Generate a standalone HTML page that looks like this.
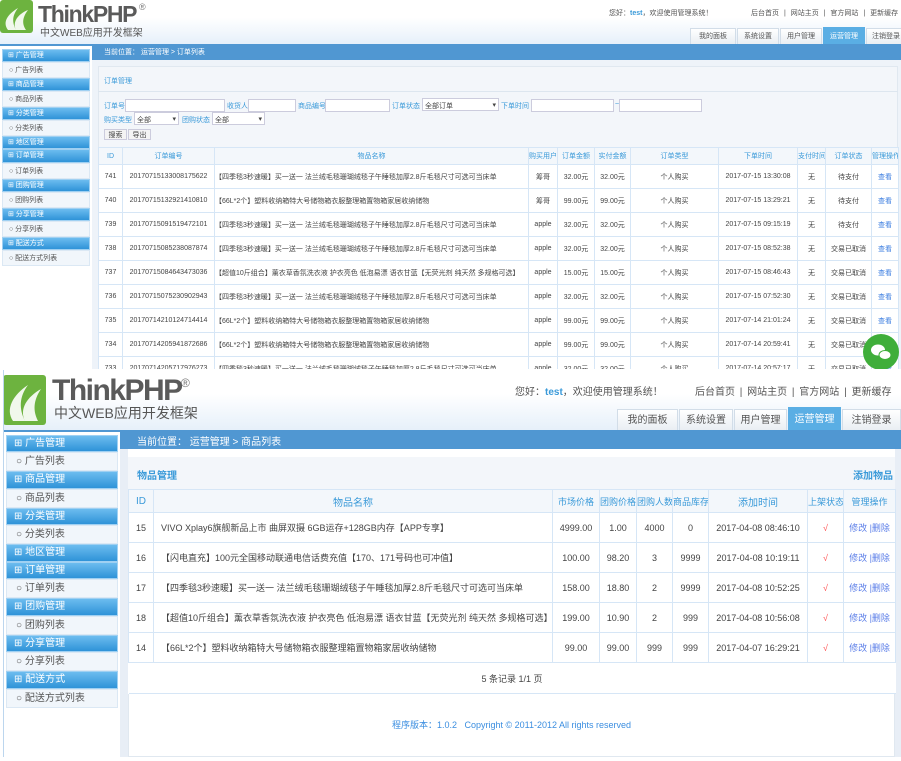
<!DOCTYPE html>
<html><head><meta charset="utf-8"><style>
*{margin:0;padding:0;box-sizing:border-box}
body{width:901px;height:761px;overflow:hidden;background:#fff;position:relative;font-family:"Liberation Sans","Noto Sans CJK SC",sans-serif;color:#444}
.a{position:absolute;white-space:nowrap}
.hdr{background:linear-gradient(#fff,#fff 40%,#e6f0fa);}
.bar{background:#5097d2}
.sh{position:absolute;color:#fff;font-weight:normal;background:linear-gradient(#6cbcef,#2f93d8);border:1px solid #9fd0f2;white-space:nowrap}
.si{position:absolute;background:#f1f6fb;border:1px solid #dbe8f4;color:#555;white-space:nowrap}
.lg{background:#6db33f;border-radius:3px}
table{border-collapse:collapse;table-layout:fixed;position:absolute}
td,th{border:1px solid #d6e6f6;text-align:center;white-space:nowrap;overflow:hidden;font-weight:normal}
th{color:#3a9ad9}
.l{text-align:left}
.blue{color:#3a9ad9}
.inp{position:absolute;background:#fff;border:1px solid #ccd;white-space:nowrap}
.tab{position:absolute;background:linear-gradient(#fff,#e9eef3);border:1px solid #d2dde8;border-bottom:none;color:#555;text-align:center;white-space:nowrap}
</style></head><body>

<!-- ============ TOP SCREENSHOT ============ -->
<div class="a hdr" style="left:0;top:0;width:901px;height:44px"></div>
<div class="a lg" style="left:0;top:0;width:33px;height:33px"><svg width="33" height="33"><path d="M8 30C2 22 8 14 18 8C12 16 12 22 16 30Z M16 30C12 22 18 14 28 10C22 18 22 24 26 30Z" fill="#fff" opacity=".9"/></svg></div>
<div class="a" style="left:38px;top:1px;font:bold 23px 'Liberation Sans';color:#5a5a5a;letter-spacing:-1.3px">ThinkPHP</div>
<div class="a" style="left:139px;top:2px;font-size:9px;color:#777">®</div>
<div class="a" style="left:40px;top:24px;font-size:10px;color:#555">中文WEB应用开发框架</div>
<div class="a" style="left:609px;top:8px;font-size:7px;color:#555">您好：<b class="blue">test</b>，欢迎使用管理系统！</div>
<div class="a" style="left:751px;top:8px;font-size:7px;color:#555;word-spacing:3px">后台首页 | 网站主页 | 官方网站 | 更新缓存</div>
<div class="tab" style="left:690px;top:28px;width:46px;height:16px;font-size:7px;line-height:16px">我的面板</div>
<div class="tab" style="left:737px;top:28px;width:42px;height:16px;font-size:7px;line-height:16px">系统设置</div>
<div class="tab" style="left:780px;top:28px;width:42px;height:16px;font-size:7px;line-height:16px">用户管理</div>
<div class="tab" style="left:823px;top:27px;width:42px;height:17px;font-size:7px;line-height:17px;background:#5aaee4;color:#fff;border-color:#5aaee4">运营管理</div>
<div class="tab" style="left:866px;top:28px;width:40px;height:16px;font-size:7px;line-height:16px">注销登录</div>
<div class="a bar" style="left:92px;top:44px;width:809px;height:16px"></div>
<div class="a" style="left:0;top:44px;width:92px;height:2px;background:#5097d2"></div>
<div class="a" style="left:104px;top:47px;font-size:7px;color:#fff">当前位置： 运营管理 &gt; 订单列表</div>
<div class="a" style="left:92px;top:60px;width:809px;height:310px;background:#eef3f9"></div>
<div class="a" style="left:98px;top:66px;width:800px;height:304px;background:#f3f6fa;border:1px solid #e0e8f0"></div>
<div class="a" style="left:98px;top:91px;width:800px;height:1px;background:#dde6ef"></div>
<div class="a blue" style="left:104px;top:76px;font-size:7px">订单管理</div>
<div class="a blue" style="left:104px;top:101px;font-size:7px">订单号</div><div class="inp" style="left:125px;top:99px;width:100px;height:13px"></div>
<div class="a blue" style="left:227px;top:101px;font-size:7px">收货人</div><div class="inp" style="left:248px;top:99px;width:48px;height:13px"></div>
<div class="a blue" style="left:298px;top:101px;font-size:7px">商品编号</div><div class="inp" style="left:325px;top:99px;width:65px;height:13px"></div>
<div class="a blue" style="left:392px;top:101px;font-size:7px">订单状态</div><div class="inp" style="left:422px;top:98px;width:77px;height:13px;font-size:7px;padding:2px">全部订单<span style="float:right">▾</span></div>
<div class="a blue" style="left:501px;top:101px;font-size:7px">下单时间</div><div class="inp" style="left:531px;top:99px;width:83px;height:13px"></div>
<div class="a blue" style="left:615px;top:101px;font-size:7px">~</div><div class="inp" style="left:619px;top:99px;width:83px;height:13px"></div>
<div class="a blue" style="left:104px;top:115px;font-size:7px">购买类型</div><div class="inp" style="left:134px;top:112px;width:45px;height:13px;font-size:7px;padding:2px">全部<span style="float:right">▾</span></div>
<div class="a blue" style="left:182px;top:115px;font-size:7px">团购状态</div><div class="inp" style="left:212px;top:112px;width:53px;height:13px;font-size:7px;padding:2px">全部<span style="float:right">▾</span></div>
<div class="inp" style="left:104px;top:129px;width:23px;height:11px;font-size:7px;text-align:center;background:#f4f4f4">搜索</div>
<div class="inp" style="left:128px;top:129px;width:23px;height:11px;font-size:7px;text-align:center;background:#f4f4f4">导出</div>

<table style="left:98px;top:147px;width:800px;font-size:7px;background:#fff">
<colgroup><col width="24"><col width="92"><col width="314"><col width="29"><col width="37"><col width="36"><col width="88"><col width="79"><col width="28"><col width="46"><col width="27"></colgroup>
<tr style="height:17px;background:#f3f7fb"><th>ID</th><th>订单编号</th><th>物品名称</th><th>购买用户</th><th>订单金额</th><th>实付金额</th><th>订单类型</th><th>下单时间</th><th>支付时间</th><th>订单状态</th><th>管理操作</th></tr>
<tr style="height:24px"><td>741</td><td>20170715133008175622</td><td class="l">【四季毯3秒速暖】买一送一 法兰绒毛毯珊瑚绒毯子午睡毯加厚2.8斤毛毯尺寸可选可当床单</td><td>筹哥</td><td>32.00元</td><td>32.00元</td><td>个人购买</td><td>2017-07-15 13:30:08</td><td>无</td><td>待支付</td><td style="color:#3b7de0">查看</td></tr>
<tr style="height:24px"><td>740</td><td>20170715132921410810</td><td class="l">【66L*2个】塑料收纳箱特大号储物箱衣服整理箱置物箱家居收纳储物</td><td>筹哥</td><td>99.00元</td><td>99.00元</td><td>个人购买</td><td>2017-07-15 13:29:21</td><td>无</td><td>待支付</td><td style="color:#3b7de0">查看</td></tr>
<tr style="height:24px"><td>739</td><td>20170715091519472101</td><td class="l">【四季毯3秒速暖】买一送一 法兰绒毛毯珊瑚绒毯子午睡毯加厚2.8斤毛毯尺寸可选可当床单</td><td>apple</td><td>32.00元</td><td>32.00元</td><td>个人购买</td><td>2017-07-15 09:15:19</td><td>无</td><td>待支付</td><td style="color:#3b7de0">查看</td></tr>
<tr style="height:24px"><td>738</td><td>20170715085238087874</td><td class="l">【四季毯3秒速暖】买一送一 法兰绒毛毯珊瑚绒毯子午睡毯加厚2.8斤毛毯尺寸可选可当床单</td><td>apple</td><td>32.00元</td><td>32.00元</td><td>个人购买</td><td>2017-07-15 08:52:38</td><td>无</td><td>交易已取消</td><td style="color:#3b7de0">查看</td></tr>
<tr style="height:24px"><td>737</td><td>20170715084643473036</td><td class="l">【超值10斤组合】薰衣草香氛洗衣液 护衣亮色 低泡易漂 语衣甘蓝【无荧光剂 纯天然 多规格可选】</td><td>apple</td><td>15.00元</td><td>15.00元</td><td>个人购买</td><td>2017-07-15 08:46:43</td><td>无</td><td>交易已取消</td><td style="color:#3b7de0">查看</td></tr>
<tr style="height:24px"><td>736</td><td>20170715075230902943</td><td class="l">【四季毯3秒速暖】买一送一 法兰绒毛毯珊瑚绒毯子午睡毯加厚2.8斤毛毯尺寸可选可当床单</td><td>apple</td><td>32.00元</td><td>32.00元</td><td>个人购买</td><td>2017-07-15 07:52:30</td><td>无</td><td>交易已取消</td><td style="color:#3b7de0">查看</td></tr>
<tr style="height:24px"><td>735</td><td>20170714210124714414</td><td class="l">【66L*2个】塑料收纳箱特大号储物箱衣服整理箱置物箱家居收纳储物</td><td>apple</td><td>99.00元</td><td>99.00元</td><td>个人购买</td><td>2017-07-14 21:01:24</td><td>无</td><td>交易已取消</td><td style="color:#3b7de0">查看</td></tr>
<tr style="height:24px"><td>734</td><td>20170714205941872686</td><td class="l">【66L*2个】塑料收纳箱特大号储物箱衣服整理箱置物箱家居收纳储物</td><td>apple</td><td>99.00元</td><td>99.00元</td><td>个人购买</td><td>2017-07-14 20:59:41</td><td>无</td><td>交易已取消</td><td style="color:#3b7de0">查看</td></tr>
<tr style="height:24px"><td>733</td><td>20170714205717976273</td><td class="l">【四季毯3秒速暖】买一送一 法兰绒毛毯珊瑚绒毯子午睡毯加厚2.8斤毛毯尺寸可选可当床单</td><td>apple</td><td>32.00元</td><td>32.00元</td><td>个人购买</td><td>2017-07-14 20:57:17</td><td>无</td><td>交易已取消</td><td style="color:#3b7de0">查看</td></tr>
</table>
<svg class="a" style="left:862px;top:333px" width="38" height="38"><circle cx="19" cy="19" r="18" fill="#3fae3a"/><ellipse cx="16" cy="17" rx="7" ry="5.5" fill="#fff"/><ellipse cx="23" cy="22" rx="6" ry="4.5" fill="#fff" stroke="#3fae3a"/></svg>

<!-- top sidebar -->
<div class="a" style="left:0;top:46px;width:92px;height:324px;background:#fff"></div>
<div class="sh" style="left:2px;top:49px;width:88px;height:13px;font-size:7px;line-height:12px;padding-left:5px">⊞ 广告管理</div>
<div class="si" style="left:2px;top:62px;width:88px;height:16px;font-size:7px;line-height:15px;padding-left:6px">○ 广告列表</div>
<div class="sh" style="left:2px;top:78px;width:88px;height:13px;font-size:7px;line-height:12px;padding-left:5px">⊞ 商品管理</div>
<div class="si" style="left:2px;top:91px;width:88px;height:16px;font-size:7px;line-height:15px;padding-left:6px">○ 商品列表</div>
<div class="sh" style="left:2px;top:107px;width:88px;height:13px;font-size:7px;line-height:12px;padding-left:5px">⊞ 分类管理</div>
<div class="si" style="left:2px;top:120px;width:88px;height:16px;font-size:7px;line-height:15px;padding-left:6px">○ 分类列表</div>
<div class="sh" style="left:2px;top:136px;width:88px;height:13px;font-size:7px;line-height:12px;padding-left:5px">⊞ 地区管理</div>
<div class="sh" style="left:2px;top:149px;width:88px;height:14px;font-size:7px;line-height:12px;padding-left:5px">⊞ 订单管理</div>
<div class="si" style="left:2px;top:163px;width:88px;height:16px;font-size:7px;line-height:15px;padding-left:6px">○ 订单列表</div>
<div class="sh" style="left:2px;top:179px;width:88px;height:13px;font-size:7px;line-height:12px;padding-left:5px">⊞ 团购管理</div>
<div class="si" style="left:2px;top:192px;width:88px;height:16px;font-size:7px;line-height:15px;padding-left:6px">○ 团购列表</div>
<div class="sh" style="left:2px;top:208px;width:88px;height:13px;font-size:7px;line-height:12px;padding-left:5px">⊞ 分享管理</div>
<div class="si" style="left:2px;top:221px;width:88px;height:16px;font-size:7px;line-height:15px;padding-left:6px">○ 分享列表</div>
<div class="sh" style="left:2px;top:237px;width:88px;height:13px;font-size:7px;line-height:12px;padding-left:5px">⊞ 配送方式</div>
<div class="si" style="left:2px;top:250px;width:88px;height:16px;font-size:7px;line-height:15px;padding-left:6px">○ 配送方式列表</div>

<!-- ============ BOTTOM SCREENSHOT ============ -->
<div class="a" style="left:0;top:369px;width:901px;height:392px;background:#fff"></div>
<div class="a hdr" style="left:3px;top:370px;width:898px;height:60px"></div>
<div class="a lg" style="left:3px;top:375px;width:43px;height:50px"><svg width="43" height="50"><path d="M10 46C2 34 10 20 25 10C16 22 16 34 22 46Z M22 46C16 34 24 22 38 14C30 26 30 36 35 46Z" fill="#fff" opacity=".9"/></svg></div>
<div class="a" style="left:52px;top:374px;font:bold 30px 'Liberation Sans';color:#5a5a5a;letter-spacing:-1.5px">ThinkPHP</div>
<div class="a" style="left:181px;top:376px;font-size:12px;color:#777">®</div>
<div class="a" style="left:54px;top:403px;font-size:14px;color:#555">中文WEB应用开发框架</div>
<div class="a" style="left:515px;top:383px;font-size:10px;color:#555">您好：<b class="blue">test</b>，欢迎使用管理系统！</div>
<div class="a" style="left:695px;top:383px;font-size:10px;color:#555;word-spacing:2px">后台首页 | 网站主页 | 官方网站 | 更新缓存</div>
<div class="tab" style="left:617px;top:409px;width:61px;height:21px;font-size:10px;line-height:21px">我的面板</div>
<div class="tab" style="left:679px;top:409px;width:54px;height:21px;font-size:10px;line-height:21px">系统设置</div>
<div class="tab" style="left:734px;top:409px;width:53px;height:21px;font-size:10px;line-height:21px">用户管理</div>
<div class="tab" style="left:788px;top:407px;width:53px;height:23px;font-size:10px;line-height:23px;background:#5aaee4;color:#fff;border-color:#5aaee4">运营管理</div>
<div class="tab" style="left:842px;top:409px;width:59px;height:21px;font-size:10px;line-height:21px">注销登录</div>
<div class="a bar" style="left:120px;top:430px;width:781px;height:19px"></div>
<div class="a" style="left:3px;top:430px;width:117px;height:2px;background:#5097d2"></div>
<div class="a" style="left:3px;top:370px;width:1px;height:387px;background:#bcd6ee"></div>
<div class="a" style="left:137px;top:433px;font-size:10px;color:#fff">当前位置： 运营管理 &gt; 商品列表</div>
<div class="a" style="left:120px;top:449px;width:8px;height:308px;background:#e8eef6"></div>
<div class="a" style="left:895px;top:449px;width:6px;height:308px;background:#e8eef6"></div>
<div class="a" style="left:128px;top:457px;width:767px;height:300px;background:#fff;border:1px solid #e0e8f0"></div>
<div class="a" style="left:128px;top:457px;width:767px;height:32px;background:#f3f6fa"></div>
<div class="a blue" style="left:137px;top:467px;font-size:10px;font-weight:bold">物品管理</div>
<div class="a blue" style="left:853px;top:467px;font-size:10px;font-weight:bold">添加物品</div>
<table style="left:128px;top:489px;width:767px;font-size:9px;background:#fff">
<colgroup><col width="25"><col width="399"><col width="47"><col width="37"><col width="36"><col width="36"><col width="99"><col width="36"><col width="52"></colgroup>
<tr style="height:23px;background:#f3f7fb"><th style="font-size:10px">ID</th><th style="font-size:10px">物品名称</th><th>市场价格</th><th>团购价格</th><th>团购人数</th><th>商品库存</th><th style="font-size:10px">添加时间</th><th>上架状态</th><th>管理操作</th></tr>
<tr style="height:30px"><td>15</td><td class="l" style="padding-left:7px">VIVO Xplay6旗舰新品上市 曲屏双摄 6GB运存+128GB内存【APP专享】</td><td>4999.00</td><td>1.00</td><td>4000</td><td>0</td><td>2017-04-08 08:46:10</td><td style="color:#f55">√</td><td style="color:#5a7de8">修改 |删除</td></tr>
<tr style="height:30px"><td>16</td><td class="l" style="padding-left:7px">【闪电直充】100元全国移动联通电信话费充值【170、171号码也可冲值】</td><td>100.00</td><td>98.20</td><td>3</td><td>9999</td><td>2017-04-08 10:19:11</td><td style="color:#f55">√</td><td style="color:#5a7de8">修改 |删除</td></tr>
<tr style="height:30px"><td>17</td><td class="l" style="padding-left:7px">【四季毯3秒速暖】买一送一 法兰绒毛毯珊瑚绒毯子午睡毯加厚2.8斤毛毯尺寸可选可当床单</td><td>158.00</td><td>18.80</td><td>2</td><td>9999</td><td>2017-04-08 10:52:25</td><td style="color:#f55">√</td><td style="color:#5a7de8">修改 |删除</td></tr>
<tr style="height:30px"><td>18</td><td class="l" style="padding-left:7px">【超值10斤组合】薰衣草香氛洗衣液 护衣亮色 低泡易漂 语衣甘蓝【无荧光剂 纯天然 多规格可选】</td><td>199.00</td><td>10.90</td><td>2</td><td>999</td><td>2017-04-08 10:56:08</td><td style="color:#f55">√</td><td style="color:#5a7de8">修改 |删除</td></tr>
<tr style="height:30px"><td>14</td><td class="l" style="padding-left:7px">【66L*2个】塑料收纳箱特大号储物箱衣服整理箱置物箱家居收纳储物</td><td>99.00</td><td>99.00</td><td>999</td><td>999</td><td>2017-04-07 16:29:21</td><td style="color:#f55">√</td><td style="color:#5a7de8">修改 |删除</td></tr>
<tr style="height:31px"><td colspan="9" style="border-left:none;border-right:none">5 条记录 1/1 页</td></tr>
</table>
<div class="a" style="left:128px;top:718px;width:767px;text-align:center;font-size:9px;color:#3b8ee0">程序版本：1.0.2 &nbsp; Copyright © 2011-2012 All rights reserved</div>

<!-- bottom sidebar -->
<div class="sh" style="left:6px;top:435px;width:112px;height:17px;font-size:10px;line-height:16px;padding-left:7px">⊞ 广告管理</div>
<div class="si" style="left:6px;top:452px;width:112px;height:19px;font-size:10px;line-height:18px;padding-left:9px">○ 广告列表</div>
<div class="sh" style="left:6px;top:471px;width:112px;height:18px;font-size:10px;line-height:16px;padding-left:7px">⊞ 商品管理</div>
<div class="si" style="left:6px;top:489px;width:112px;height:19px;font-size:10px;line-height:18px;padding-left:9px">○ 商品列表</div>
<div class="sh" style="left:6px;top:508px;width:112px;height:17px;font-size:10px;line-height:16px;padding-left:7px">⊞ 分类管理</div>
<div class="si" style="left:6px;top:525px;width:112px;height:19px;font-size:10px;line-height:18px;padding-left:9px">○ 分类列表</div>
<div class="sh" style="left:6px;top:544px;width:112px;height:18px;font-size:10px;line-height:16px;padding-left:7px">⊞ 地区管理</div>
<div class="sh" style="left:6px;top:562px;width:112px;height:17px;font-size:10px;line-height:16px;padding-left:7px">⊞ 订单管理</div>
<div class="si" style="left:6px;top:579px;width:112px;height:19px;font-size:10px;line-height:18px;padding-left:9px">○ 订单列表</div>
<div class="sh" style="left:6px;top:598px;width:112px;height:18px;font-size:10px;line-height:16px;padding-left:7px">⊞ 团购管理</div>
<div class="si" style="left:6px;top:616px;width:112px;height:19px;font-size:10px;line-height:18px;padding-left:9px">○ 团购列表</div>
<div class="sh" style="left:6px;top:635px;width:112px;height:17px;font-size:10px;line-height:16px;padding-left:7px">⊞ 分享管理</div>
<div class="si" style="left:6px;top:652px;width:112px;height:19px;font-size:10px;line-height:18px;padding-left:9px">○ 分享列表</div>
<div class="sh" style="left:6px;top:671px;width:112px;height:18px;font-size:10px;line-height:16px;padding-left:7px">⊞ 配送方式</div>
<div class="si" style="left:6px;top:689px;width:112px;height:19px;font-size:10px;line-height:18px;padding-left:9px">○ 配送方式列表</div>
</body></html>
